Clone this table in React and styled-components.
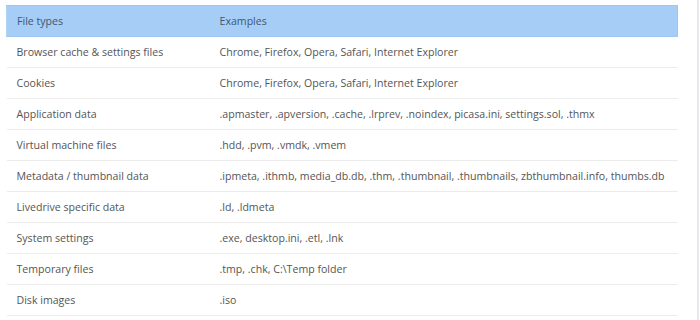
import React from "react";
import styled, { createGlobalStyle } from "styled-components";

const Global = createGlobalStyle`
  html, body { margin: 0; padding: 0; background: #fff; }
  body { font-family: "Open Sans", "Liberation Sans", sans-serif; }
`;

const Page = styled.div`
  display: flex;
  width: 700px;
  height: 320px;
  overflow: hidden;
`;

const Content = styled.div`
  flex: 1;
  padding: 5px 0 0 6px;
`;

const Rail = styled.div`
  width: 1px;
  border-left: 2px solid #e8e7ef;
`;

const Table = styled.table`
  width: 672px;
  table-layout: fixed;
  border-collapse: collapse;
  font-size: 10.6px;
  color: #555;
`;

const HeadCell = styled.th`
  background: #a5cdf6;
  color: #3d5872;
  font-weight: 400;
  text-align: left;
  height: 31px;
  padding: 0 10px;
  box-sizing: border-box;
  border-top: 1px solid #9fc6ee;
  border-bottom: 1px solid #9fc6ee;
  &:first-child { border-left: 1px solid #b0d3f6; }
  &:last-child { border-right: 1px solid #9fc6ee; }
  width: ${(p) => (p.$w ? p.$w : "auto")};
`;

const Cell = styled.td`
  padding: 6px 10px;
  line-height: 18px;
  border-bottom: 1px solid #ececec;
  white-space: nowrap;
`;

const rows = [
  ["Browser cache & settings files", "Chrome, Firefox, Opera, Safari, Internet Explorer"],
  ["Cookies", "Chrome, Firefox, Opera, Safari, Internet Explorer"],
  ["Application data", ".apmaster, .apversion, .cache, .lrprev, .noindex, picasa.ini, settings.sol, .thmx"],
  ["Virtual machine files", ".hdd, .pvm, .vmdk, .vmem"],
  ["Metadata / thumbnail data", ".ipmeta, .ithmb, media_db.db, .thm, .thumbnail, .thumbnails, zbthumbnail.info, thumbs.db"],
  ["Livedrive specific data", ".ld, .ldmeta"],
  ["System settings", ".exe, desktop.ini, .etl, .lnk"],
  ["Temporary files", ".tmp, .chk, C:\\Temp folder"],
  ["Disk images", ".iso"],
];

export default function App() {
  return (
    <>
      <Global />
      <Page>
        <Content>
          <Table>
            <thead>
              <tr>
                <HeadCell $w="203px">File types</HeadCell>
                <HeadCell>Examples</HeadCell>
              </tr>
            </thead>
            <tbody>
              {rows.map(([a, b]) => (
                <tr key={a}>
                  <Cell>{a}</Cell>
                  <Cell>{b}</Cell>
                </tr>
              ))}
            </tbody>
          </Table>
        </Content>
        <Rail />
      </Page>
    </>
  );
}
